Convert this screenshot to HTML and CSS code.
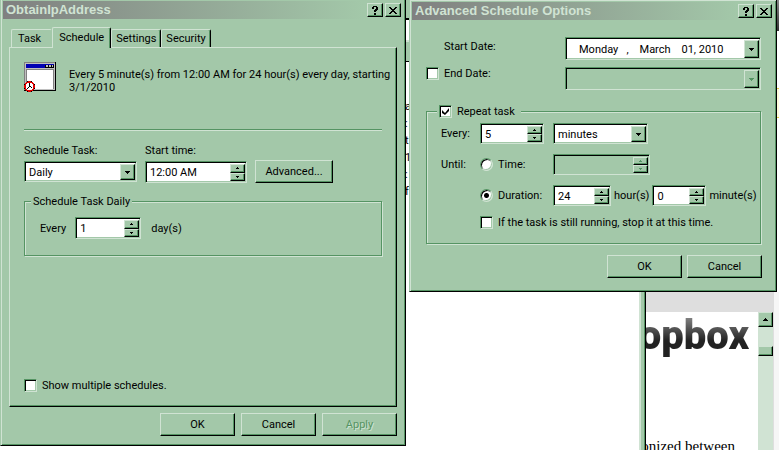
FILE: index.html
```
<!DOCTYPE html>
<html lang="en">

<head>
    <meta charset="utf-8">
    <title>ObtainIpAddress</title>
    <link rel="stylesheet" href="styles.css">
</head>

<body>
    <!-- arrows shared by the drop-downs and spin buttons -->
    <svg class="defs" width="0" height="0" aria-hidden="true">
        <symbol id="down" viewBox="0 0 5 3"><path d="M0 0h5v1h-1v1h-1v1h-1v-1h-1v-1h-1z"/></symbol>
        <symbol id="spinup" viewBox="0 0 3 2"><path d="M1 0h1v1h1v1h-3v-1h1z"/></symbol>
        <symbol id="spindown" viewBox="0 0 3 2"><path d="M0 0h3v1h-1v1h-1v-1h-1z"/></symbol>
        <symbol id="help" viewBox="0 0 6 9"><path d="M1 0h4v1h1v3h-1v1h-1v1h-2v-2h1v-1h1v-2h-2v2h-2v-2h1zM2 7h2v2h-2z"/></symbol>
        <symbol id="close" viewBox="0 0 8 7"><path d="M0 0h2v1h1v1h2v-1h1v-1h2v1h-1v1h-1v1h-1v1h1v1h1v1h1v1h-2v-1h-1v-1h-2v1h-1v1h-2v-1h1v-1h1v-1h1v-1h-1v-1h-1v-1h-1z"/></symbol>
    </svg>

    <main class="desktop">
        <!-- browser at the back -->
        <section class="browser">
            <div class="browser-top"></div>
            <div class="browser-note"></div>
            <div class="browser-view">
                <div class="browser-bar"></div>
                <div class="browser-row">
                    <div class="page">
                        <div class="logo">opbox</div>
                        <p>onized between</p>
                    </div>
                    <div class="scrollbar">
                        <button type="button" class="raised scroll-up" aria-label="Scroll up"><svg width="5" height="3"><path d="M2 0h1v1h1v1h1v1h-5v-1h1v-1h1z"/></svg></button>
                        <div class="raised thumb"></div>
                    </div>
                </div>
            </div>
        </section>

        <!-- scheduled tasks folder -->
        <section class="folder">
            <div class="folder-menu"></div>
            <div class="folder-address"></div>
            <div class="folder-head"></div>
            <ul class="folder-list">
                <li>a</li>
                <li>:</li>
                <li>t</li>
                <li>1</li>
                <li>:</li>
                <li>f</li>
            </ul>
        </section>

        <section class="window task">
            <header class="titlebar">
                <h1>ObtainIpAddress</h1>
                <button type="button" class="raised" aria-label="Help"><svg width="6" height="9"><use href="#help"/></svg></button>
                <button type="button" class="raised" aria-label="Close"><svg width="8" height="7"><use href="#close"/></svg></button>
            </header>
            <div class="task-body">
                <nav class="tabs">
                    <button type="button" class="tab">Task</button>
                    <button type="button" class="tab active">Schedule</button>
                    <button type="button" class="tab">Settings</button>
                    <button type="button" class="tab">Security</button>
                </nav>
                <div class="panel">
                    <div class="summary">
                        <svg class="task-icon" width="32" height="32" viewBox="0 0 32 32">
                            <path fill="#808080" d="M0 0h32v29h-32z"/>
                            <path fill="#c0c0c0" d="M1 1h30v27h-30z"/>
                            <path fill="#000" d="M31 0h1v29h-32v-1h31z"/>
                            <path fill="#0000b4" d="M2 2h28v4h-28z"/>
                            <path fill="#000" d="M21 3h9v3h-9z"/>
                            <path fill="#c0c0c0" d="M22 3h2v2h-2zM25 3h2v2h-2zM28 3h1v2h-1z"/>
                            <path fill="#808080" d="M2 7h28v20h-28z"/>
                            <path fill="#fff" d="M3 8h26v19h-26z"/>
                            <circle cx="5.5" cy="24.5" r="5" fill="#fff" stroke="#000"/>
                            <circle cx="5.5" cy="24.5" r="4.5" fill="#fff" stroke="#e00000" stroke-width="1.5"/>
                            <path fill="#000" d="M5 21h1v3h1v1h1v1h-1v-1h-2v1h-1v1h-1v-1h1v-1h1z"/>
                        </svg>
                        <p>Every 5 minute(s) from 12:00 AM for 24 hour(s) every day, starting 3/1/2010</p>
                    </div>
                    <hr>
                    <div class="fields">
                        <div class="field">
                            <label for="kind">Schedule Task:</label>
                            <div class="sunken dropdown kind">
                                <select id="kind"><option>Daily</option></select>
                                <span class="raised arrow"><svg width="5" height="3"><use href="#down"/></svg></span>
                            </div>
                        </div>
                        <div class="field">
                            <label for="start">Start time:</label>
                            <div class="sunken stepper start">
                                <input type="text" id="start" value="12:00 AM">
                                <div class="spin">
                                    <button type="button" class="raised" aria-label="Later"><svg width="3" height="2"><use href="#spinup"/></svg></button>
                                    <button type="button" class="raised" aria-label="Earlier"><svg width="3" height="2"><use href="#spindown"/></svg></button>
                                </div>
                            </div>
                        </div>
                        <button type="button" class="raised push advanced">Advanced...</button>
                    </div>
                    <fieldset class="daily">
                        <legend>Schedule Task Daily</legend>
                        <label for="days">Every</label>
                        <div class="sunken stepper days">
                            <input type="text" id="days" value="1">
                            <div class="spin">
                                <button type="button" class="raised" aria-label="More"><svg width="3" height="2"><use href="#spinup"/></svg></button>
                                <button type="button" class="raised" aria-label="Less"><svg width="3" height="2"><use href="#spindown"/></svg></button>
                            </div>
                        </div>
                        <span>day(s)</span>
                    </fieldset>
                    <label class="check multiple"><input type="checkbox">Show multiple schedules.</label>
                </div>
                <footer class="buttons">
                    <button type="button" class="raised push">OK</button>
                    <button type="button" class="raised push">Cancel</button>
                    <button type="button" class="raised push" disabled>Apply</button>
                </footer>
            </div>
        </section>

        <section class="window options">
            <header class="titlebar">
                <h1>Advanced Schedule Options</h1>
                <button type="button" class="raised" aria-label="Help"><svg width="6" height="9"><use href="#help"/></svg></button>
                <button type="button" class="raised" aria-label="Close"><svg width="8" height="7"><use href="#close"/></svg></button>
            </header>
            <div class="options-body">
                <div class="dates">
                    <label class="start-date" for="from">Start Date:</label>
                    <div class="sunken date">
                        <input type="text" id="from" value="Monday   ,    March    01, 2010">
                        <button type="button" class="raised arrow" aria-label="Pick start date"><svg width="5" height="3"><use href="#down"/></svg></button>
                    </div>
                    <label class="check end-date"><input type="checkbox">End Date:</label>
                    <div class="sunken date off">
                        <input type="text" aria-label="End date" disabled>
                        <button type="button" class="raised arrow" aria-label="Pick end date" disabled><svg width="5" height="3"><use href="#down"/></svg></button>
                    </div>
                </div>
                <fieldset class="repeat">
                    <legend><label class="check"><input type="checkbox" checked>Repeat task</label></legend>
                    <div class="repeat-grid">
                        <label for="every">Every:</label>
                        <div class="sunken stepper every">
                            <input type="text" id="every" value="5">
                            <div class="spin">
                                <button type="button" class="raised" aria-label="More"><svg width="3" height="2"><use href="#spinup"/></svg></button>
                                <button type="button" class="raised" aria-label="Less"><svg width="3" height="2"><use href="#spindown"/></svg></button>
                            </div>
                        </div>
                        <div class="sunken dropdown unit">
                            <select aria-label="Unit"><option>minutes</option></select>
                            <span class="raised arrow"><svg width="5" height="3"><use href="#down"/></svg></span>
                        </div>

                        <span>Until:</span>
                        <label class="check"><input type="radio" name="until">Time:</label>
                        <div class="sunken stepper until off">
                            <input type="text" aria-label="Until time" disabled>
                            <div class="spin">
                                <button type="button" class="raised" aria-label="Later" disabled><svg width="3" height="2"><use href="#spinup"/></svg></button>
                                <button type="button" class="raised" aria-label="Earlier" disabled><svg width="3" height="2"><use href="#spindown"/></svg></button>
                            </div>
                        </div>

                        <label class="check duration"><input type="radio" name="until" checked>Duration:</label>
                        <div class="amount">
                            <div class="sunken stepper hours">
                                <input type="text" id="hours" value="24">
                                <div class="spin">
                                    <button type="button" class="raised" aria-label="More"><svg width="3" height="2"><use href="#spinup"/></svg></button>
                                    <button type="button" class="raised" aria-label="Less"><svg width="3" height="2"><use href="#spindown"/></svg></button>
                                </div>
                            </div>
                            <label for="hours">hour(s)</label>
                            <div class="sunken stepper minutes">
                                <input type="text" id="minutes" value="0">
                                <div class="spin">
                                    <button type="button" class="raised" aria-label="More"><svg width="3" height="2"><use href="#spinup"/></svg></button>
                                    <button type="button" class="raised" aria-label="Less"><svg width="3" height="2"><use href="#spindown"/></svg></button>
                                </div>
                            </div>
                            <label for="minutes">minute(s)</label>
                        </div>

                        <label class="check stop"><input type="checkbox">If the task is still running, stop it at this time.</label>
                    </div>
                </fieldset>
                <footer class="buttons">
                    <button type="button" class="raised push">OK</button>
                    <button type="button" class="raised push">Cancel</button>
                </footer>
            </div>
        </section>
    </main>
</body>

</html>
```

FILE: styles.css
```
:root {
    --face: #a3c8a9;
    --light: #d0e3d3;
    --dark: #559463;
}

* {
    box-sizing: border-box;
}

body {
    margin: 0;
    background: #fff;
    color: #000;
    font: 11px/13px Roboto, "Liberation Sans", Arial, sans-serif;
}

p, h1, ul {
    margin: 0;
    padding: 0;
}

button, input, select {
    font: inherit;
    color: inherit;
    margin: 0;
    padding: 0;
    border: 0;
    border-radius: 0;
    background: none;
    appearance: none;
    outline: none;
}

svg {
    display: block;
    flex: none;
    fill: currentColor;
    shape-rendering: crispEdges;
}

.defs {
    position: absolute;
}

.desktop {
    position: relative;
    height: 100vh;
    overflow: hidden;
}

/* 3d edges */
.raised {
    background: var(--face);
    border: 1px solid;
    border-color: var(--light) #000 #000 var(--light);
    box-shadow: inset -1px -1px 0 var(--dark);
    display: flex;
    align-items: center;
    justify-content: center;
}

.sunken {
    background: #fff;
    border: 1px solid;
    border-color: var(--dark) var(--light) var(--light) var(--dark);
    box-shadow: inset 1px 1px 0 #000, inset -1px -1px 0 var(--face);
    padding: 2px 1px 1px 2px;
    display: flex;
    height: 21px;
}

.off {
    background: var(--face);
}

button:disabled {
    color: var(--dark);
    text-shadow: 1px 1px 0 var(--light);
}

/* windows */
.window {
    position: absolute;
    background: var(--face);
    border: 1px solid;
    border-color: var(--face) #000 #000 var(--face);
    box-shadow: inset 1px 1px 0 var(--light), inset -1px -1px 0 var(--dark);
    padding: 2px;
}

.task {
    left: 0;
    top: -2px;
    width: 406px;
}

.options {
    left: 409px;
    top: -1px;
    width: 368px;
}

.titlebar {
    display: flex;
    align-items: center;
    height: 18px;
    padding: 0 2px 0 3px;
    background: linear-gradient(to right, #808080, var(--face) 90%);
}

.titlebar h1 {
    flex: 1;
    font: bold 13px/18px "Liberation Sans", Arial, sans-serif;
    color: var(--light);
}

.titlebar button {
    width: 16px;
    height: 14px;
    margin-left: 2px;
}

.push {
    width: 75px;
    height: 23px;
}

.buttons {
    display: flex;
    justify-content: flex-end;
    gap: 6px;
}

/* controls */
.sunken input, .sunken select {
    flex: 1;
    min-width: 0;
    width: 100%;
    padding-left: 2px;
}

.dropdown {
    position: relative;
}

.arrow {
    width: 15px;
    flex: none;
}

.dropdown .arrow {
    position: absolute;
    top: 2px;
    right: 1px;
    bottom: 1px;
    pointer-events: none;
}

.spin {
    display: grid;
    grid-template-rows: 1fr 1fr;
    width: 15px;
}

.check {
    display: flex;
    align-items: center;
    gap: 5px;
}

.check input {
    width: 13px;
    height: 13px;
    flex: none;
    background: #fff;
    border: 1px solid;
    border-color: var(--dark) var(--light) var(--light) var(--dark);
    box-shadow: inset 1px 1px 0 #000, inset -1px -1px 0 var(--face);
}

.check input[type=radio] {
    border-radius: 50%;
}

.check input[type=radio]:checked {
    background: radial-gradient(circle, #000 2px, #fff 3px);
}

.check input[type=checkbox]:checked::before {
    content: "";
    display: block;
    width: 7px;
    height: 7px;
    margin: 2px;
    background: #000;
    clip-path: polygon(0 2px, 3px 5px, 7px 0, 7px 3px, 3px 7px, 0 5px);
}

fieldset {
    margin: 0;
    min-width: 0;
    border: 1px solid var(--dark);
    box-shadow: 1px 1px 0 var(--light), inset 1px 1px 0 var(--light);
}

legend {
    background: var(--face);
}

/* task window */
.task-body {
    padding: 8px 6px 7px;
}

.tabs {
    display: flex;
    align-items: flex-end;
    padding-left: 2px;
}

.tab {
    height: 18px;
    padding: 0 4px;
    border: 1px solid;
    border-color: var(--light) #000 transparent var(--light);
    border-bottom: 0;
    border-radius: 2px 2px 0 0;
    box-shadow: inset -1px 0 0 var(--dark);
    background: var(--face);
}

/* its right edge lies under the selected tab */
.tab:first-child {
    padding: 0 10px 0 6px;
    border-right-color: var(--face);
    box-shadow: none;
}

.tab.active {
    position: relative;
    height: 21px;
    margin-bottom: -1px;
    padding: 0 6px 2px;
}

.panel {
    display: flex;
    flex-direction: column;
    min-height: 360px;
    padding: 14px;
    border: 1px solid;
    border-color: var(--light) #000 #000 var(--light);
    box-shadow: inset -1px -1px 0 var(--dark);
}

.summary {
    display: flex;
    gap: 13px;
    margin-right: -10px;
}

.summary p {
    padding-top: 6px;
}

hr {
    width: 100%;
    height: 2px;
    margin: 35px 0 13px;
    border: 0;
    border-top: 1px solid var(--dark);
    border-bottom: 1px solid var(--light);
}

.fields {
    display: flex;
    align-items: flex-end;
    gap: 8px;
}

.field {
    display: flex;
    flex-direction: column;
    gap: 4px;
    align-self: flex-start;
}

.kind {
    width: 113px;
}

.start {
    width: 102px;
    height: 22px;
}

.advanced {
    width: 78px;
}

.daily {
    display: flex;
    align-items: center;
    margin-top: 12px;
    padding: 9px 15px 16px;
}

.daily legend {
    margin-left: -9px;
    padding: 0 2px;
}

.days {
    width: 66px;
    height: 22px;
    margin: 0 10px 0 9px;
}

.multiple {
    margin-top: auto;
}

.task .buttons {
    margin-top: 6px;
}

/* options window */
.options-body {
    padding: 17px 12px 11px 14px;
}

.dates {
    display: grid;
    grid-template-columns: 139px 1fr;
    gap: 7px 0;
    margin-right: 1px;
}

.start-date {
    padding: 3px 0 0 18px;
}

.end-date {
    align-self: start;
}

.date {
    height: 23px;
}

#from {
    padding-left: 11px;
    white-space: pre;
}

.repeat {
    margin: 15px 1px 0 0;
    padding: 5px 0 14px 14px;
}

.repeat legend {
    margin-left: -4px;
    padding-right: 6px;
}

.repeat-grid {
    display: grid;
    grid-template-columns: 39px 73px 1fr;
    row-gap: 10px;
    align-items: center;
}

.every {
    width: 64px;
}

.unit {
    width: 95px;
}

.until {
    width: 97px;
}

.duration {
    grid-column: 2;
}

.amount {
    display: flex;
    align-items: center;
    gap: 3px;
}

.hours {
    width: 58px;
}

.minutes {
    width: 54px;
}

.stop {
    grid-column: 2 / 4;
}

.options .buttons {
    gap: 5px;
    margin-top: 11px;
}

/* folder window, mostly covered */
.folder {
    position: absolute;
    left: 300px;
    top: 0;
    bottom: 0;
    width: 346px;
    background: #fff;
    border-right: 1px solid #000;
    box-shadow: inset -1px 0 0 var(--dark), inset -4px 0 0 var(--face), inset -6px 0 0 var(--light);
}

.folder-menu {
    height: 20px;
    background: var(--face);
    border-bottom: 2px solid #000;
}

.folder-address {
    height: 20px;
}

.folder-head {
    height: 22px;
    background: var(--face);
    border-top: 2px solid var(--light);
    border-bottom: 1px solid #000;
}

.folder-list {
    display: grid;
    grid-auto-rows: 17px;
    padding: 38px 0 0 105px;
    list-style: none;
}

/* browser window, mostly covered */
.browser {
    position: absolute;
    left: 640px;
    right: 0;
    top: 0;
    bottom: 0;
    display: flex;
    flex-direction: column;
    background: #fff;
}

.browser-top {
    height: 31px;
    background: linear-gradient(#888, #333);
}

.browser-note {
    height: 30px;
    margin-top: 57px;
    background: #fffbdc;
    border: 1px solid #e6cf4a;
    border-width: 1px 0;
}

.browser-view {
    flex: 1;
    display: flex;
    flex-direction: column;
    margin-top: 174px;
    border-right: 5px solid #f6f6f6;
}

.browser-bar {
    height: 20px;
    background: #dedede;
}

.browser-row {
    flex: 1;
    display: flex;
    border-right: 1px solid #dedede;
}

.page {
    flex: 1;
    min-width: 0;
    display: flex;
    flex-direction: column;
    align-items: flex-end;
    height: 138px;
    padding-right: 9px;
    overflow: hidden;
}

.logo {
    font: 900 40px/48px Roboto, sans-serif;
    background: linear-gradient(#999, #222 60%);
    background-clip: text;
    -webkit-background-clip: text;
    color: transparent;
}

.page p {
    margin-top: 76px;
    padding-right: 14px;
    font: 15px/20px "Liberation Serif", serif;
}

.scrollbar {
    width: 15px;
    background: var(--light);
}

.scroll-up {
    width: 15px;
    height: 15px;
}

.thumb {
    height: 10px;
    margin-top: 19px;
}
```
